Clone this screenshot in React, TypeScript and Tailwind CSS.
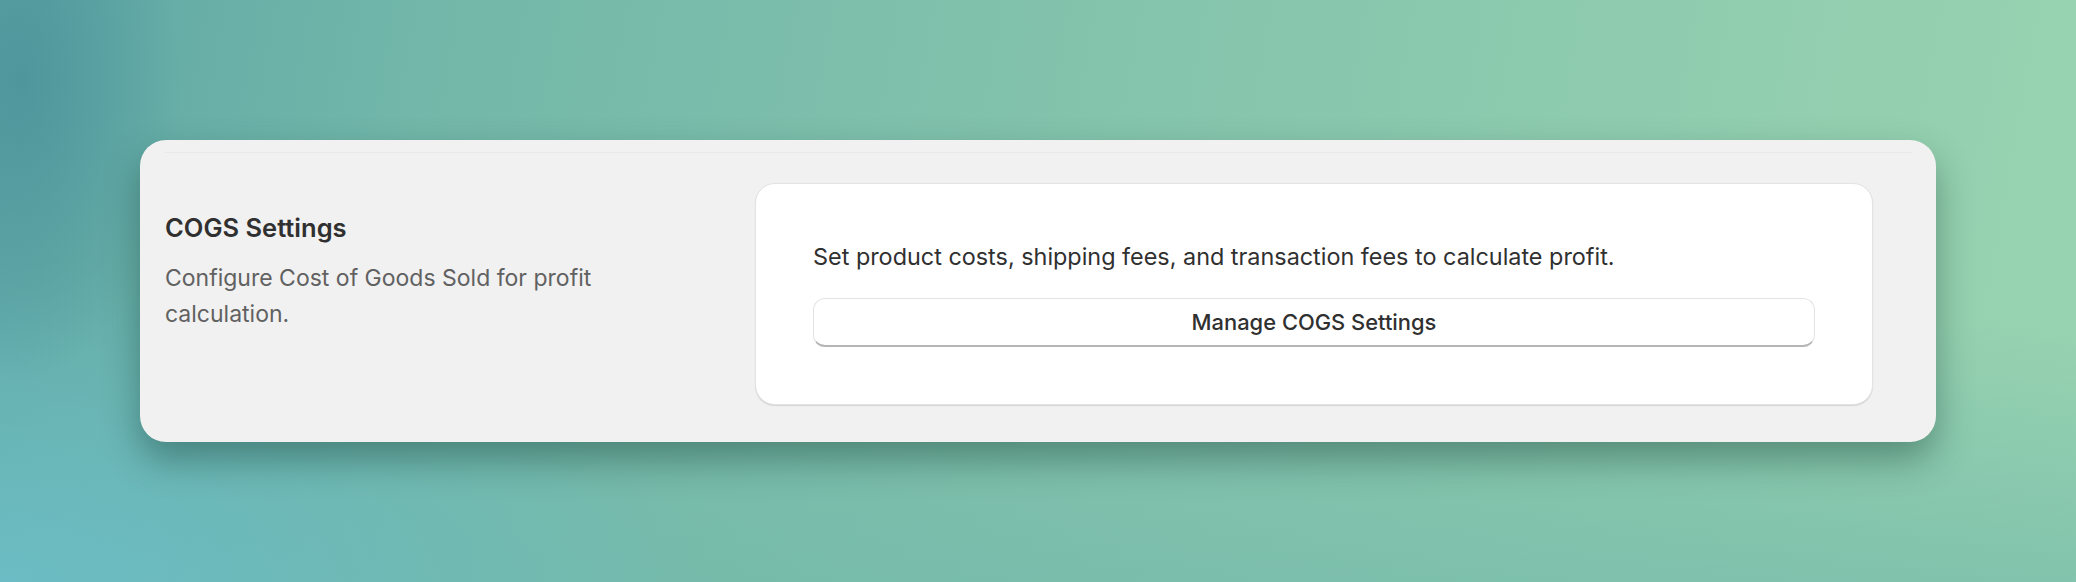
export default function App() {
  return (
    <div
      className="w-[2076px] h-[582px] overflow-hidden pt-[140px] pl-[140px] bg-[radial-gradient(ellipse_160px_300px_at_20px_80px,#4e969c_0%,rgba(78,150,156,0)_100%),radial-gradient(ellipse_700px_320px_at_0%_100%,#6bbcc4_0%,rgba(107,188,196,0)_100%),linear-gradient(180deg,rgba(0,0,0,0)_55%,rgba(114,184,170,0.6)_100%),linear-gradient(100deg,#5fa7a6_0%,#72b7a9_20%,#86c5ad_55%,#99d4b1_100%)]"
      style={{ fontFamily: "Inter, 'Noto Sans', sans-serif" }}
    >
      <div className="w-[1796px] h-[302px] rounded-[26px] bg-[#f1f1f1] shadow-[0_18px_36px_rgba(20,60,50,0.42)] flex flex-col">
        <div className="mx-[24px] mt-[12px] h-px bg-[#e9e9e9]" />
        <div className="flex pl-[25px] pr-[63px] pt-[30px]">
          <div className="w-[590px] shrink-0 pt-[29px]">
            <div className="text-[25.5px] leading-[32px] font-semibold text-[#303030]">COGS Settings</div>
            <div className="mt-[16px] text-[23px] leading-[36px] text-[#616161] w-[470px]">
              Configure Cost of Goods Sold for profit calculation.
            </div>
          </div>
          <div className="flex-1 bg-white rounded-[20px] border border-[#e3e3e3] shadow-[0_1px_1px_rgba(0,0,0,0.12)] px-[57px] pt-[58px] pb-[57px]">
            <div className="text-[23.4px] leading-[30px] text-[#303030]">
              Set product costs, shipping fees, and transaction fees to calculate profit.
            </div>
            <button className="mt-[26px] w-full h-[49px] rounded-[12px] bg-white border border-[#e3e3e3] border-b-[#b5b5b5] border-b-2 text-[21.9px] font-medium text-[#303030] flex items-center justify-center">
              Manage COGS Settings
            </button>
          </div>
        </div>
      </div>
    </div>
  );
}
